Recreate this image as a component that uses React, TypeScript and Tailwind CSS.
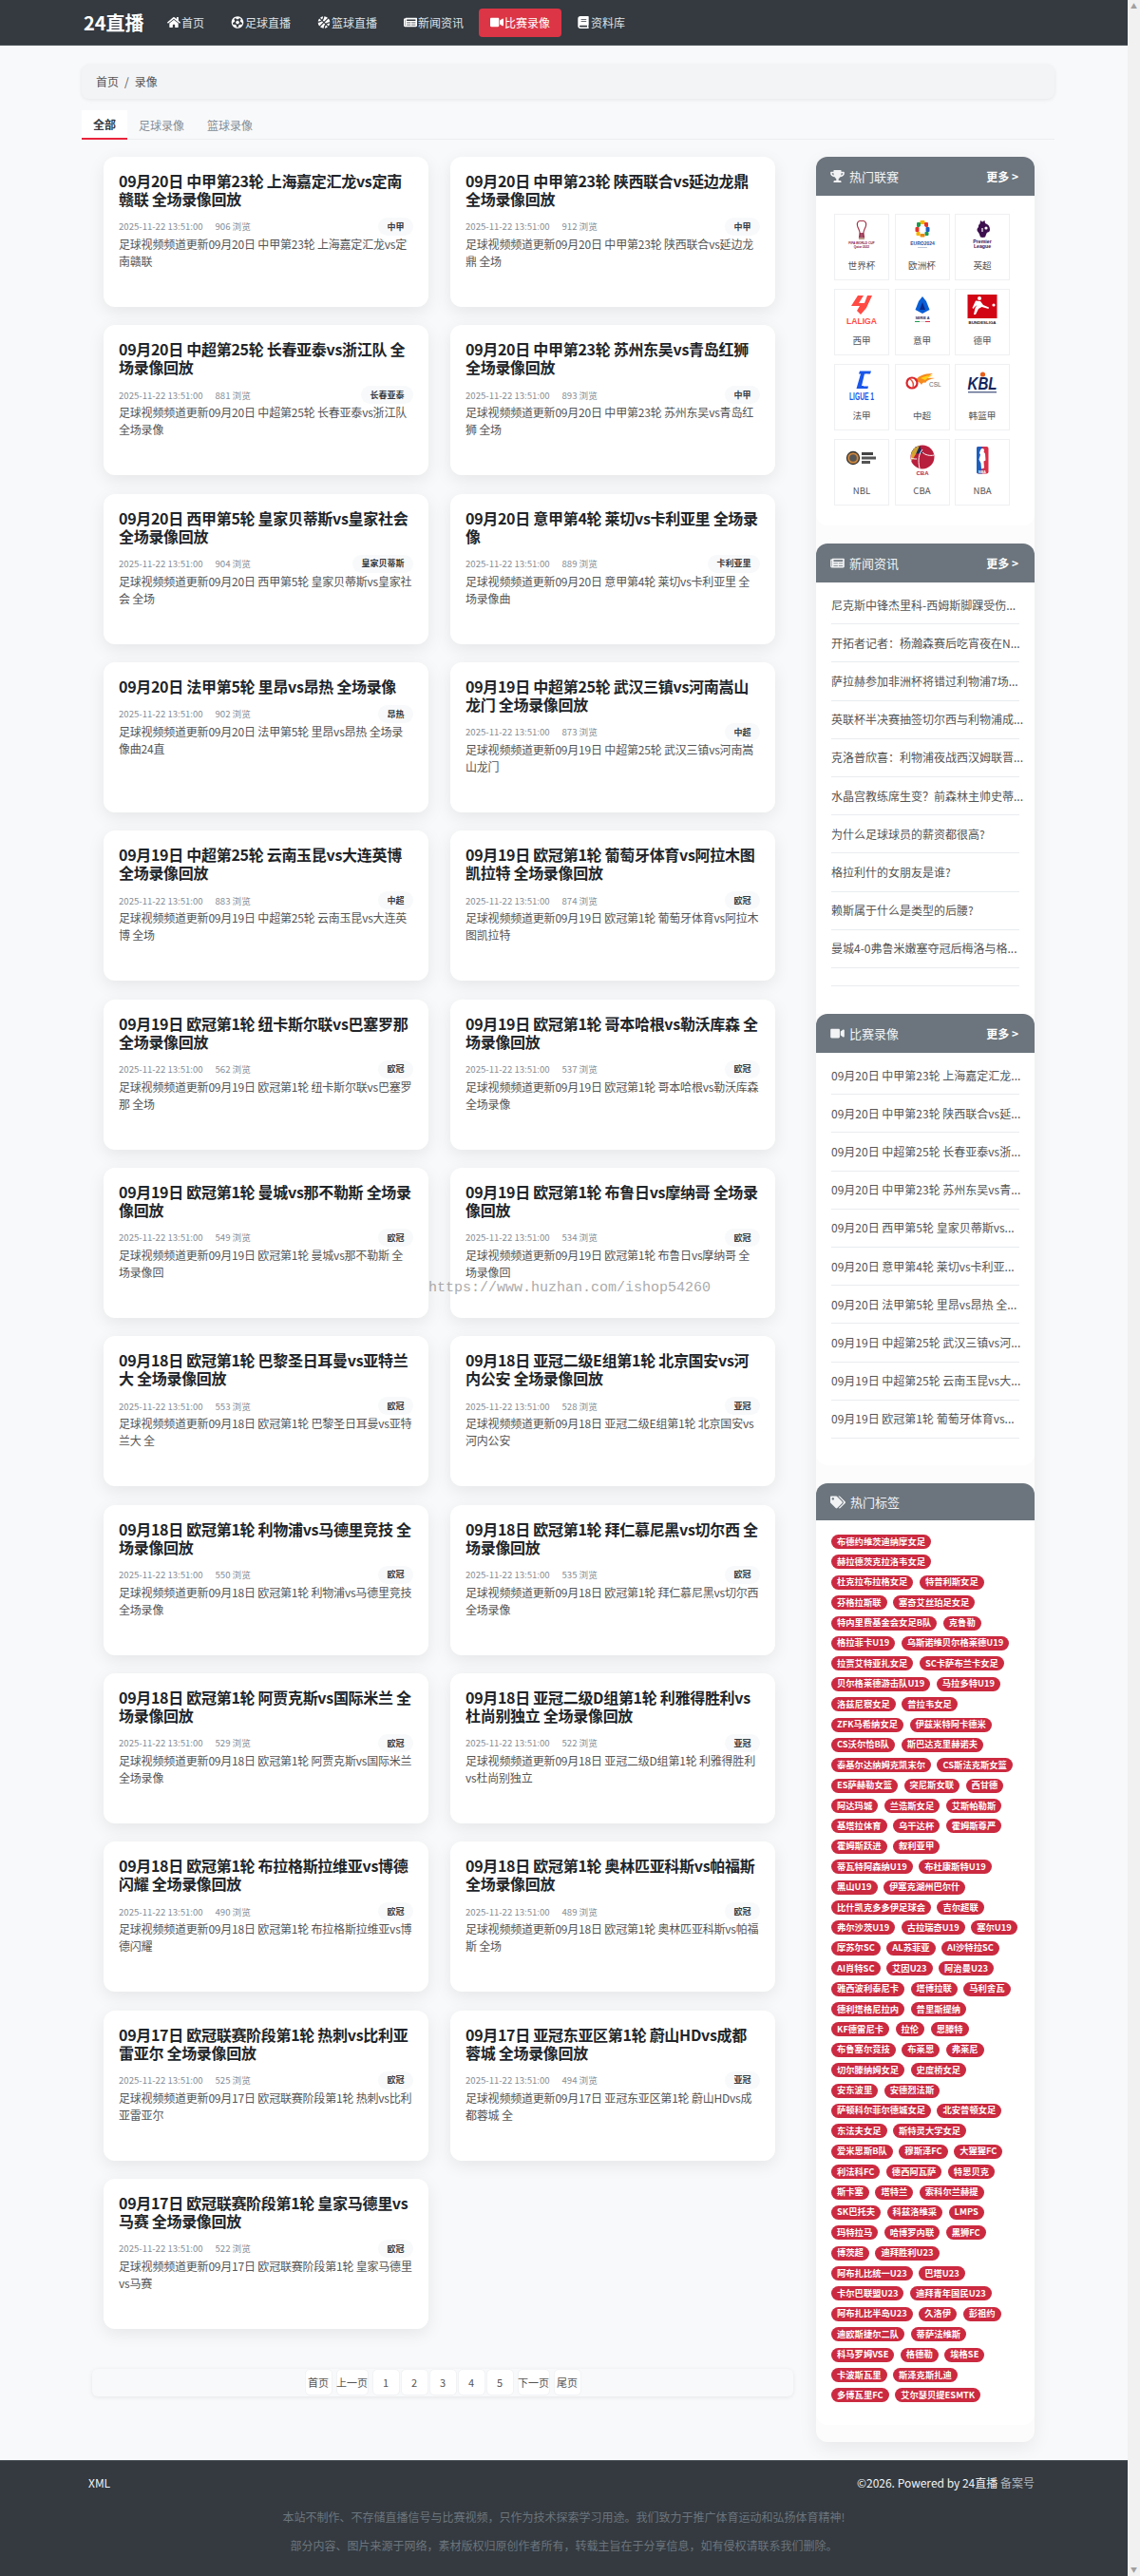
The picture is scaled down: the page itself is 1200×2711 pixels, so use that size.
import React from "react";
import { FaHome, FaFutbol, FaBasketballBall, FaNewspaper, FaVideo, FaBook, FaTrophy, FaTags } from "react-icons/fa";

const d = (date: string, comp: string, teams: string, views: number, badge: string, tail: string, titleTail = " 全场录像回放") => ({
  title: `${date} ${comp} ${teams}${titleTail}`,
  desc: `足球视频频道更新${date} ${comp} ${teams}${tail}`,
  views,
  badge,
});

const cards = [
  d("09月20日", "中甲第23轮", "上海嘉定汇龙vs定南赣联", 906, "中甲", ""),
  d("09月20日", "中甲第23轮", "陕西联合vs延边龙鼎", 912, "中甲", " 全场"),
  d("09月20日", "中超第25轮", "长春亚泰vs浙江队", 881, "长春亚泰", " 全场录像"),
  d("09月20日", "中甲第23轮", "苏州东吴vs青岛红狮", 893, "中甲", " 全场"),
  d("09月20日", "西甲第5轮", "皇家贝蒂斯vs皇家社会", 904, "皇家贝蒂斯", " 全场"),
  d("09月20日", "意甲第4轮", "莱切vs卡利亚里", 889, "卡利亚里", " 全场录像曲", " 全场录\n像"),
  d("09月20日", "法甲第5轮", "里昂vs昂热", 902, "昂热", " 全场录像曲24直", " 全场录像"),
  d("09月19日", "中超第25轮", "武汉三镇vs河南嵩山龙门", 873, "中超", ""),
  d("09月19日", "中超第25轮", "云南玉昆vs大连英博", 883, "中超", " 全场"),
  d("09月19日", "欧冠第1轮", "葡萄牙体育vs阿拉木图凯拉特", 874, "欧冠", ""),
  d("09月19日", "欧冠第1轮", "纽卡斯尔联vs巴塞罗那", 562, "欧冠", " 全场"),
  d("09月19日", "欧冠第1轮", "哥本哈根vs勒沃库森", 537, "欧冠", " 全场录像"),
  d("09月19日", "欧冠第1轮", "曼城vs那不勒斯", 549, "欧冠", " 全场录像回"),
  d("09月19日", "欧冠第1轮", "布鲁日vs摩纳哥", 534, "欧冠", " 全场录像回"),
  d("09月18日", "欧冠第1轮", "巴黎圣日耳曼vs亚特兰大", 553, "欧冠", " 全"),
  d("09月18日", "亚冠二级E组第1轮", "北京国安vs河内公安", 528, "亚冠", ""),
  d("09月18日", "欧冠第1轮", "利物浦vs马德里竞技", 550, "欧冠", " 全场录像"),
  d("09月18日", "欧冠第1轮", "拜仁慕尼黑vs切尔西", 535, "欧冠", " 全场录像"),
  d("09月18日", "欧冠第1轮", "阿贾克斯vs国际米兰", 529, "欧冠", " 全场录像"),
  d("09月18日", "亚冠二级D组第1轮", "利雅得胜利vs杜尚别独立", 522, "亚冠", ""),
  d("09月18日", "欧冠第1轮", "布拉格斯拉维亚vs博德闪耀", 490, "欧冠", ""),
  d("09月18日", "欧冠第1轮", "奥林匹亚科斯vs帕福斯", 489, "欧冠", " 全场"),
  d("09月17日", "欧冠联赛阶段第1轮", "热刺vs比利亚雷亚尔", 525, "欧冠", ""),
  d("09月17日", "亚冠东亚区第1轮", "蔚山HDvs成都蓉城", 494, "亚冠", " 全"),
  d("09月17日", "欧冠联赛阶段第1轮", "皇家马德里vs马赛", 522, "欧冠", ""),
];

const news = [
  "尼克斯中锋杰里科-西姆斯脚踝受伤...",
  "开拓者记者：杨瀚森赛后吃宵夜在N...",
  "萨拉赫参加非洲杯将错过利物浦7场...",
  "英联杯半决赛抽签切尔西与利物浦成...",
  "克洛普欣喜：利物浦夜战西汉姆联晋...",
  "水晶宫教练席生变？前森林主帅史蒂...",
  "为什么足球球员的薪资都很高?",
  "格拉利什的女朋友是谁?",
  "赖斯属于什么是类型的后腰?",
  "曼城4-0弗鲁米嫩塞夺冠后梅洛与格...",
];

const videos = [
  "09月20日 中甲第23轮 上海嘉定汇龙...",
  "09月20日 中甲第23轮 陕西联合vs延...",
  "09月20日 中超第25轮 长春亚泰vs浙...",
  "09月20日 中甲第23轮 苏州东吴vs青...",
  "09月20日 西甲第5轮 皇家贝蒂斯vs...",
  "09月20日 意甲第4轮 莱切vs卡利亚...",
  "09月20日 法甲第5轮 里昂vs昂热 全...",
  "09月19日 中超第25轮 武汉三镇vs河...",
  "09月19日 中超第25轮 云南玉昆vs大...",
  "09月19日 欧冠第1轮 葡萄牙体育vs...",
];

const tags = "布德约维茨迪纳摩女足,赫拉德茨克拉洛韦女足,杜克拉布拉格女足,特普利斯女足,芬格拉斯联,塞奇艾丝珀足女足,特内里费基金会女足B队,克鲁勒,格拉菲卡U19,乌斯诺维贝尔格莱德U19,拉贾艾特亚扎女足,SC卡萨布兰卡女足,贝尔格莱德游击队U19,马拉多特U19,洛兹尼察女足,普拉韦女足,ZFK马希纳女足,伊兹米特阿卡德米,CS沃尔恰B队,斯巴达克里赫诺夫,泰基尔达纳姆克凯末尔,CS斯法克斯女篮,ES萨赫勒女篮,突尼斯女联,西甘德,阿达玛城,兰浩斯女足,艾斯帕勒斯,基塔拉体育,乌干达杯,霍姆斯尊严,霍姆斯跃进,叙利亚甲,蒂瓦特阿森纳U19,布杜康斯特U19,黑山U19,伊塞克湖州巴尔什,比什凯克多多伊足球会,吉尔超联,弗尔沙茨U19,古拉瑞奇U19,塞尔U19,摩苏尔SC,AL苏菲亚,AI沙特拉SC,AI肖特SC,艾因U23,阿治曼U23,雅西波利泰尼卡,塔博拉联,马利舍瓦,德利塔格尼拉内,普里斯提纳,KF德雷尼卡,拉伦,恩滕特,布鲁塞尔竞技,布莱恩,弗莱尼,切尔滕纳姆女足,史度桥女足,安东波里,安德烈法斯,萨顿科尔菲尔德城女足,北安普顿女足,东法夫女足,斯特灵大学女足,爱米恩斯B队,穆斯泽FC,大猩猩FC,利法科FC,德西阿瓦萨,特恩贝克,斯卡塞,塔特兰,索科尔兰赫提,SK巴托夫,科兹洛维采,LMPS,玛特拉马,哈博罗内联,黑狮FC,博茨超,迪拜胜利U23,阿布扎比统一U23,巴塔U23,卡尔巴联盟U23,迪拜青年国民U23,阿布扎比半岛U23,久洛伊,彭祖约,迪欧斯捷尔二队,蒂萨法维斯,科马罗姆VSE,格德勒,埃格SE,卡波斯瓦里,斯泽克斯扎迪,多博瓦里FC,艾尔瑟贝提ESMTK".split(",");

const logoFont = { fontFamily: "'Liberation Sans', sans-serif" };

const WorldCup = () => (
  <svg viewBox="0 0 44 36" className="w-[44px] h-[36px]" style={logoFont}>
    <path d="M20 1.500c-2 .5-3 2.500-2.500 5 .5 2.500 2 4 2.500 7 .3 2-.3 4-.5 6h5c-.2-2-.8-4-.5-6 .5-3 2-4.500 2.500-7 .5-2.500-.5-4.500-2.500-5z" fill="#fff" stroke="#a5354a" strokeWidth="1.200" />
    <path d="M20 14h4l.6 5h-5z" fill="#8a1538" opacity=".75" />
    <rect x="19" y="19" width="6" height="2" fill="#b98" />
    <text x="22" y="26" fontSize="3.200" fontWeight="700" fill="#8a1538" textAnchor="middle">FIFA WORLD CUP</text>
    <text x="22" y="30" fontSize="3.200" fontWeight="700" fill="#8a1538" textAnchor="middle">Qatar 2022</text>
  </svg>
);

const Euro = () => (
  <svg viewBox="0 0 44 36" className="w-[44px] h-[36px]" style={logoFont}>
    <rect x="19.500" y="1" width="5" height="4" rx="1" fill="#f4b400" />
    <rect x="16" y="3" width="4" height="5" rx="1" fill="#1c9a50" />
    <rect x="24" y="3" width="4" height="5" rx="1" fill="#e5352b" />
    <rect x="14.500" y="8" width="4" height="5" rx="1" fill="#e5352b" />
    <rect x="25.500" y="8" width="4" height="5" rx="1" fill="#1d5fbf" />
    <rect x="19" y="7" width="6" height="7" rx="1" fill="#fff" stroke="#d7dce5" strokeWidth=".5" />
    <rect x="15.500" y="13" width="4" height="4" rx="1" fill="#f4b400" />
    <rect x="24.500" y="13" width="4" height="4" rx="1" fill="#1c9a50" />
    <rect x="19.500" y="15" width="5" height="3.500" rx="1" fill="#e98a15" />
    <text x="22" y="27" fontSize="5" fontWeight="700" fill="#1f4f9a" textAnchor="middle">EURO2024</text>
    <rect x="17" y="29" width="10" height=".8" fill="#a8b6cc" />
  </svg>
);

const Premier = () => (
  <svg viewBox="0 0 44 36" className="w-[44px] h-[36px]" style={logoFont}>
    <path d="M20 1l2 1.500L24.500 1l.5 3c3 1 5 3 5 6.500 0 2-1 3-2.500 3l-1 1-1.500 4c-2 .5-3 .5-5 0-1-2.500-1-4-3-6-1-1.500-.5-3.500 1-4.500-.5-1.500.5-3 1.500-3.500z" fill="#3d0f4f" />
    <circle cx="26" cy="9" r="1.600" fill="#fff" />
    <path d="M21 9h2v4h-2z" fill="#fff" opacity=".6" />
    <text x="22" y="25" fontSize="5.200" fontWeight="700" fill="#3d0f4f" textAnchor="middle">Premier</text>
    <text x="22" y="30" fontSize="5.200" fontWeight="700" fill="#3d0f4f" textAnchor="middle">League</text>
  </svg>
);

const LaLiga = () => (
  <svg viewBox="0 0 44 36" className="w-[44px] h-[36px]" style={logoFont}>
    <path d="M18 1h6l-5 8h6l3-8h5l-6 13-6 7-4-4 3-5h-9z" fill="#ff4b44" />
    <text x="22" y="31" fontSize="8.600" fontWeight="700" fill="#ff4b44" textAnchor="middle">LALIGA</text>
  </svg>
);

const SerieA = () => (
  <svg viewBox="0 0 44 36" className="w-[44px] h-[36px]" style={logoFont}>
    <path d="M22 2l4 5 3.500 9-7.500 4-7.500-4L18 7z" fill="#0a5fd6" />
    <path d="M22 8l3 8h-6z" fill="#0b2a8a" />
    <text x="22" y="26" fontSize="3.800" fontWeight="700" fill="#1b2a5c" textAnchor="middle">SERIE A</text>
    <rect x="14" y="28" width="5" height="1" fill="#1c9a50" />
    <rect x="19" y="28" width="6" height="1" fill="#ddd" />
    <rect x="25" y="28" width="5" height="1" fill="#d8304a" />
  </svg>
);

const Bundes = () => (
  <svg viewBox="0 0 44 36" className="w-[44px] h-[36px]" style={logoFont}>
    <rect x="6.500" y="0" width="31" height="25" fill="#d20515" />
    <circle cx="19" cy="4" r="2" fill="#fff" />
    <path d="M15 6.500l5 .5 3 4 6 2.500-.5 1.500-7-2-3.500 2-3 6h-2l1.500-7 2-3-2.500 2-1.500 2-1-1z" fill="#fff" />
    <circle cx="34" cy="11" r="1.600" fill="#fff" />
    <text x="22" y="31" fontSize="4.400" fontWeight="700" fill="#222" textAnchor="middle">BUNDESLIGA</text>
  </svg>
);

const Ligue = () => (
  <svg viewBox="0 0 44 36" className="w-[44px] h-[36px]" style={logoFont}>
    <path d="M20 1.500h12l-1 3-4 0-3 13h5l-.6 2.500H16.500l4.500-15.500h-2z" fill="#1a56e8" />
    <path d="M25 4.500h3L25 17h-3z" fill="#fff" />
    <text x="22" y="32" fontSize="10" fontWeight="700" fill="#1a56e8" textAnchor="middle" textLength="26" lengthAdjust="spacingAndGlyphs">LIGUE 1</text>
  </svg>
);

const Csl = () => (
  <svg viewBox="0 0 44 36" className="w-[44px] h-[36px]" style={logoFont}>
    <path d="M14 12c3-5 9-8 19-8-3 2-5 3-6 5 2-.5 5-.5 8 0-5 1-8 2-10 5-2-1-3 0-4 2-1-2-4-4-7-4z" fill="#f58a1f" />
    <path d="M20 9c4-2 8-3 13-3-3 1-6 3-8 5z" fill="#fcd116" />
    <circle cx="11" cy="14" r="5.500" fill="none" stroke="#d8262e" strokeWidth="2.200" />
    <path d="M9 10c3 2 4 5 3 9" fill="none" stroke="#e8503a" strokeWidth="1.500" />
    <text x="29" y="18" fontSize="6.500" fill="#666" fontWeight="400">CSL</text>
  </svg>
);

const Kbl = () => (
  <svg viewBox="0 0 44 36" className="w-[44px] h-[36px]" style={logoFont}>
    <circle cx="22.500" cy="5" r="2.600" fill="#e8601c" />
    <text x="22" y="21" fontSize="18" fontWeight="700" fontStyle="italic" fill="#12265f" textAnchor="middle" textLength="31" lengthAdjust="spacingAndGlyphs">KBL</text>
    <rect x="7" y="23" width="30" height="1.400" fill="#12265f" opacity=".7" />
  </svg>
);

const Nbl = () => (
  <svg viewBox="0 0 44 36" className="w-[44px] h-[36px]" style={logoFont}>
    <circle cx="13" cy="14" r="6.500" fill="#c9843f" stroke="#333" strokeWidth="1.300" />
    <circle cx="13" cy="14" r="3.800" fill="#555" />
    <rect x="22" y="8" width="12" height="3" fill="#444" />
    <rect x="22" y="12.500" width="15" height="3" fill="#555" />
    <rect x="22" y="17" width="9" height="3" fill="#555" />
  </svg>
);

const Cba = () => (
  <svg viewBox="0 0 44 36" className="w-[44px] h-[36px]" style={logoFont}>
    <circle cx="22" cy="13" r="12.500" fill="#b81f3c" />
    <path d="M10 10a12.500 12.500 0 0 1 9-9l3 8z" fill="#1a2a5c" />
    <path d="M10 11c0-5 5-9 9-10l-4 9-5 8z" fill="#e3b22e" opacity=".9" />
    <path d="M22 5c-4 5-5 11-3 20M22 8c3 3 8 4 12 3M16 15c-2 0-4 0-6-1" stroke="#fff" strokeWidth="1" fill="none" />
    <text x="22" y="32" fontSize="6" fontWeight="700" fill="#b81f3c" textAnchor="middle">CBA</text>
  </svg>
);

const Nba = () => (
  <svg viewBox="0 0 44 36" className="w-[44px] h-[36px]" style={logoFont}>
    <rect x="16" y="2" width="12.500" height="28.500" rx="2" fill="#d8304a" />
    <path d="M18 2h4v28.500h-4a2 2 0 0 1-2-2V4a2 2 0 0 1 2-2z" fill="#1d5fbf" />
    <path d="M22 4c2 0 2.500 2 1.500 3.500l1.500 2 .5 7-2 1 .5 7-3 1-.5-6-2-4 1.500-5L19 9c.5-3 1.500-5 3-5z" fill="#fff" />
    <text x="22" y="29.500" fontSize="3.600" fontWeight="700" fill="#fff" textAnchor="middle">NBA</text>
  </svg>
);

const leagues: [string, React.FC][] = [
  ["世界杯", WorldCup], ["欧洲杯", Euro], ["英超", Premier],
  ["西甲", LaLiga], ["意甲", SerieA], ["德甲", Bundes],
  ["法甲", Ligue], ["中超", Csl], ["韩篮甲", Kbl],
  ["NBL", Nbl], ["CBA", Cba], ["NBA", Nba],
];

const nav: [string, React.ComponentType<{ className?: string }>, boolean][] = [
  ["首页", FaHome, false],
  ["足球直播", FaFutbol, false],
  ["篮球直播", FaBasketballBall, false],
  ["新闻资讯", FaNewspaper, false],
  ["比赛录像", FaVideo, true],
  ["资料库", FaBook, false],
];

function SideHead({ icon: Icon, title, more = true, tall = true }: { icon: React.ComponentType<{ className?: string }>; title: string; more?: boolean; tall?: boolean }) {
  return (
    <div className={`flex items-center justify-between bg-[#6c757d] rounded-t-[12px] pl-[15px] pr-[17px] ${tall ? "h-[41px]" : "h-[39px]"}`}>
      <div className="flex items-center text-[13px] text-[#f1f3f5]">
        <Icon className={tall ? "w-[15px] h-[13px] mr-[5px]" : "w-[16px] h-[14px] mr-[5px]"} />
        <span>{title}</span>
      </div>
      {more && <span className="text-[12px] font-bold text-white">更多 &gt;</span>}
    </div>
  );
}

function SideList({ items, extra }: { items: string[]; extra?: boolean }) {
  return (
    <ul className="pt-[4px] px-[16px]">
      {items.map((t) => (
        <li key={t} className="h-[40.2px] border-b border-[#e9ecef] flex items-center text-[12px] text-[#555] whitespace-nowrap">
          {t}
        </li>
      ))}
      {extra && <li className="h-[19px] border-b border-[#e9ecef]" />}
    </ul>
  );
}

export default function App() {
  return (
    <div className="relative flex w-[1200px] bg-[#f8f9fa] font-['Noto_Sans_CJK_SC','Noto_Sans',sans-serif]">
      <div className="w-[1187px] shrink-0">
        <header className="h-[48px] bg-[#343a40] border-b border-[#495057] flex items-center pl-[88px]">
          <span className="text-[20px] font-bold text-white w-[76px] leading-none">24直播</span>
          <nav className="flex items-center gap-[4px]">
            {nav.map(([label, Icon, active]) => (
              <a key={label} className={`h-[30px] flex items-center px-[12px] text-[12px] rounded-[4px] ${active ? "bg-[#dc3545] text-white" : "text-[#dee2e6]"}`}>
                <Icon className="w-[14px] h-[13px] mr-[1px] text-white" />
                <span>{label}</span>
              </a>
            ))}
          </nav>
        </header>

        <div className="w-[1024px] ml-[86px] pt-[20px] pb-[19px]">
          <div className="h-[36px] rounded-[8px] bg-[#f3f4f6] shadow-[0_1px_4px_rgba(0,0,0,0.08)] flex items-center pl-[15px] text-[12px] text-[#555]">
            <span>首页</span>
            <span className="mx-[6px]">/</span>
            <span>录像</span>
          </div>

          <div className="mt-[12px] h-[31px] border-b border-[#ebedef] flex text-[12px] text-[#868e96]">
            <span className="h-[31px] flex items-center px-[12px] bg-white border-b-2 border-[#e8233c] font-bold text-[#343a40]">全部</span>
            <span className="h-[31px] flex items-center px-[12px]">足球录像</span>
            <span className="h-[31px] flex items-center px-[12px]">篮球录像</span>
          </div>

          <div className="flex mt-[18px]">
            <div className="ml-[11px] w-[738px] shrink-0">
              <div className="grid grid-cols-[342px_342px] gap-x-[23px] gap-y-[19.33px] pl-[12px]">
                {cards.map((c) => (
                  <article key={c.title} className="h-[158px] bg-white rounded-[12px] shadow-[0_5px_18px_rgba(0,0,0,0.08)] px-[16px] pt-[16px]">
                    <h3 className="text-[16px] leading-[19px] font-bold tracking-[-0.3px] whitespace-pre-line text-[#212529]">{c.title}</h3>
                    <div className="mt-[10px] h-[19px] flex items-center justify-between">
                      <div className="text-[9.6px] text-[#868e96] flex gap-[12.8px]">
                        <span>2025-11-22 13:51:00</span>
                        <span>{c.views} 浏览</span>
                      </div>
                      <span className="h-[19px] flex items-center px-[9.6px] rounded-full bg-[#f8f9fa] text-[9px] font-bold text-[#343a40]">{c.badge}</span>
                    </div>
                    <p className="text-[12px] leading-[18px] tracking-[-0.2px] text-[#555]">{c.desc}</p>
                  </article>
                ))}
              </div>

              <div className="mt-[42px] h-[29px] rounded-[6px] bg-[#f8f9fa] shadow-[0_1px_5px_rgba(0,0,0,0.08)] flex items-center justify-center gap-[4px] text-[11px] text-[#555]">
                <span className="h-[28px] w-[29px] flex items-center justify-center bg-white rounded-[5px] border border-[#f1f3f5]">首页</span>
                <span className="h-[28px] w-[34px] flex items-center justify-center bg-white rounded-[5px] border border-[#f1f3f5] whitespace-nowrap">上一页</span>
                <div className="flex gap-[1px]">
                  {[1, 2, 3, 4, 5].map((n) => (
                    <span key={n} className="h-[28px] w-[29px] flex items-center justify-center bg-white rounded-[5px] border border-[#f1f3f5]">{n}</span>
                  ))}
                </div>
                <span className="h-[28px] w-[34px] flex items-center justify-center bg-white rounded-[5px] border border-[#f1f3f5] whitespace-nowrap">下一页</span>
                <span className="h-[28px] w-[29px] flex items-center justify-center bg-white rounded-[5px] border border-[#f1f3f5]">尾页</span>
              </div>
            </div>

            <aside className="ml-[24px] w-[230px] shrink-0 h-[2405px] bg-[#fcfcfd] rounded-[12px] shadow-[0_6px_20px_rgba(0,0,0,0.07)]">
              <section className="h-[388px] bg-white rounded-[12px]">
                <SideHead icon={FaTrophy} title="热门联赛" />
                <div className="pl-[19px] pt-[19px] grid grid-cols-[58px_58px_58px] gap-x-[5.5px] gap-y-[9px]">
                  {leagues.map(([name, Logo]) => (
                    <div key={name} className="h-[70px] border border-[#eff0f2] flex flex-col items-center pt-[5px]">
                      <Logo />
                      <span className="mt-[5px] text-[9.6px] leading-[14px] text-[#555]">{name}</span>
                    </div>
                  ))}
                </div>
              </section>

              <section className="mt-[19px] h-[495px] bg-white rounded-t-[12px]">
                <SideHead icon={FaNewspaper} title="新闻资讯" />
                <SideList items={news} extra />
              </section>

              <section className="h-[475px] bg-white rounded-[12px]">
                <SideHead icon={FaVideo} title="比赛录像" />
                <SideList items={videos} />
              </section>

              <section className="mt-[19px] h-[991px] bg-white rounded-[12px]">
                <SideHead icon={FaTags} title="热门标签" more={false} tall={false} />
                <div className="pl-[16px] pr-[17px] pt-[15px] flex flex-wrap gap-x-[6.5px] gap-y-[6.4px]">
                  {tags.map((t) => (
                    <span key={t} className="h-[15px] flex items-center px-[6px] rounded-full bg-[#cb2a40] text-[9.3px] font-bold text-white whitespace-nowrap">{t}</span>
                  ))}
                </div>
              </section>
            </aside>
          </div>
        </div>

        <footer className="h-[122px] bg-[#343a40] border-t border-[#495057] text-[12px]">
          <div className="flex justify-between pl-[93px] pr-[98px] pt-[14px] text-[#f1f3f5]">
            <span>XML</span>
            <span>©2026. Powered by 24直播 <span className="text-[#adb5bd]">备案号</span></span>
          </div>
          <p className="mt-[18px] text-center text-[#6c757d] leading-[18px]">本站不制作、不存储直播信号与比赛视频，只作为技术探索学习用途。我们致力于推广体育运动和弘扬体育精神!</p>
          <p className="mt-[12px] text-center text-[#6c757d] leading-[18px]">部分内容、图片来源于网络，素材版权归原创作者所有，转载主旨在于分享信息，如有侵权请联系我们删除。</p>
        </footer>
      </div>

      <div className="w-[13px] bg-[#f1f1f1] flex flex-col justify-between items-center text-[7px] text-[#a0a0a0] leading-[13px]">
        <span>▲</span>
        <span>▼</span>
      </div>

      <div className="absolute left-[451px] top-[1347px] text-[15px] leading-[18px] text-[#888] opacity-70 font-['Liberation_Mono',monospace] pointer-events-none">
        https://www.huzhan.com/ishop54260
      </div>
    </div>
  );
}
